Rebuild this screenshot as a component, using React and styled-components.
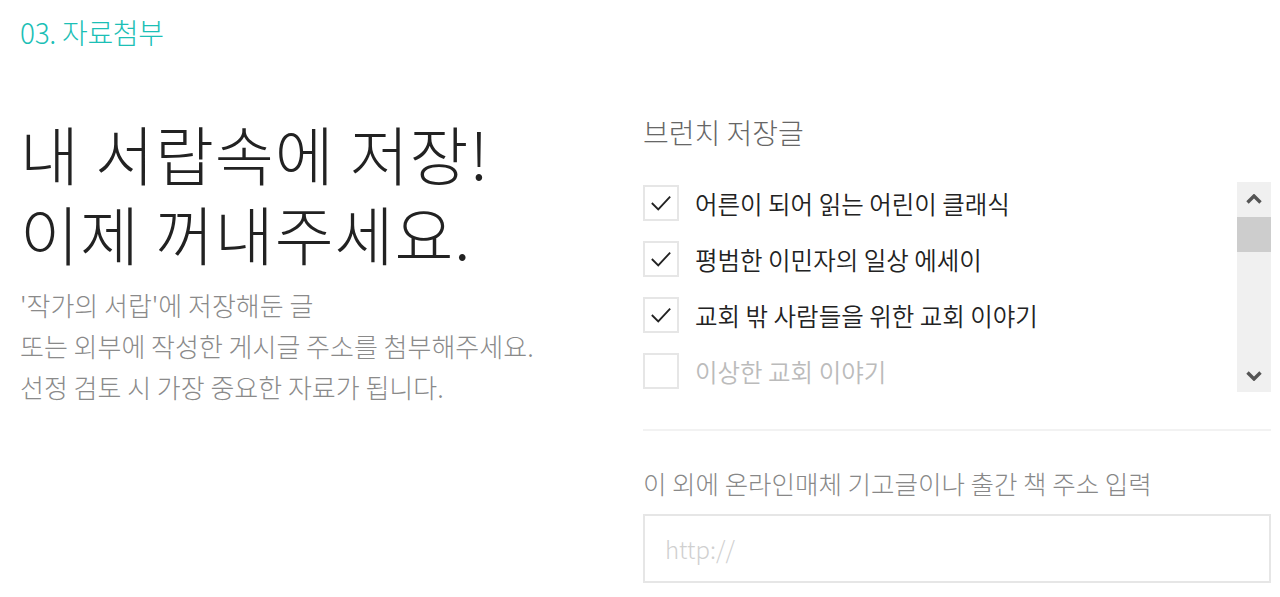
import React from 'react';
import styled, { createGlobalStyle } from 'styled-components';

const GlobalStyle = createGlobalStyle`
  html, body {
    margin: 0;
    padding: 0;
    background: #ffffff;
  }
  body {
    font-family: 'Noto Sans CJK KR', 'Noto Sans', sans-serif;
    color: #333333;
  }
`;

const Page = styled.div`
  padding: 10px 9px 0 20px;
  height: 597px;
  box-sizing: border-box;
  overflow: hidden;
`;

const StepTitle = styled.h3`
  margin: 0;
  font-size: 28px;
  font-weight: 300;
  color: #1cbfb6;
  line-height: 44px;
  letter-spacing: -0.3px;
`;

const Columns = styled.div`
  display: flex;
  margin-top: 58px;
`;

const Intro = styled.div`
  width: 623px;
  flex-shrink: 0;
`;

const Headline = styled.h2`
  margin: 0;
  font-size: 64px;
  font-weight: 300;
  line-height: 80px;
  letter-spacing: 1px;
  color: #222222;
`;

const Description = styled.p`
  margin: 12px 0 0;
  font-size: 26px;
  font-weight: 300;
  line-height: 41px;
  color: #8a8a8a;
`;

const Side = styled.div`
  flex: 1;
  display: flex;
  flex-direction: column;
`;

const SideLabel = styled.div`
  font-size: ${p => p.$size || 28}px;
  font-weight: 300;
  color: ${p => p.$color || '#666666'};
  line-height: 40px;
  margin-top: ${p => p.$top || 0}px;
`;

const ListBox = styled.div`
  display: flex;
  height: 210px;
  margin-top: 30px;
`;

const List = styled.ul`
  flex: 1;
  list-style: none;
  margin: 0;
  padding: 3px 0 0;
  display: flex;
  flex-direction: column;
  gap: 20px;
`;

const Item = styled.li`
  display: flex;
  align-items: center;
  gap: 16px;
  height: 36px;
  font-size: 24.5px;
  font-weight: 350;
  color: ${p => (p.$checked ? '#222222' : '#bbbbbb')};
`;

const Box = styled.span`
  width: 36px;
  height: 36px;
  box-sizing: border-box;
  border: 2px solid #e6e6e6;
  display: flex;
  align-items: center;
  justify-content: center;
  flex-shrink: 0;
  svg {
    width: 22px;
    height: 22px;
  }
`;

const Scrollbar = styled.div`
  width: 34px;
  background: #f0f0f0;
  display: flex;
  flex-direction: column;
  align-items: stretch;
`;

const ArrowButton = styled.div`
  height: 35px;
  display: flex;
  align-items: center;
  justify-content: center;
  flex-shrink: 0;
  svg {
    width: 16px;
    height: 12px;
  }
`;

const Thumb = styled.div`
  height: 35px;
  background: #cdcdcd;
`;

const Track = styled.div`
  flex: 1;
`;

const Divider = styled.hr`
  margin: 37px 0 0;
  border: none;
  border-top: 2px solid #f2f2f2;
`;

const UrlInput = styled.input`
  margin-top: 11px;
  height: 69px;
  box-sizing: border-box;
  border: 2px solid #e6e6e6;
  padding: 0 20px;
  font-family: 'Noto Sans CJK KR', 'Noto Sans', sans-serif;
  font-size: 24px;
  font-weight: 300;
  color: #333333;
  outline: none;
  &::placeholder {
    color: #d0d0d0;
  }
`;

const Check = () => (
  <svg viewBox="0 0 24 24" fill="none" stroke="#222" strokeWidth="2">
    <path d="M2 12l7 7L22 5" />
  </svg>
);

const Chevron = ({ down }) => (
  <svg viewBox="0 0 16 12" fill="none" stroke="#555" strokeWidth="3.4" strokeLinejoin="miter">
    <path d={down ? 'M1.5 3.5L8 10l6.5-6.5' : 'M1.5 8.5L8 2l6.5 6.5'} />
  </svg>
);

const posts = [
  { title: '어른이 되어 읽는 어린이 클래식', checked: true },
  { title: '평범한 이민자의 일상 에세이', checked: true },
  { title: '교회 밖 사람들을 위한 교회 이야기', checked: true },
  { title: '이상한 교회 이야기', checked: false },
];

export default function App() {
  return (
    <>
      <GlobalStyle />
      <Page>
        <StepTitle>03. 자료첨부</StepTitle>
        <Columns>
          <Intro>
            <Headline>
              내 서랍속에 저장!
              <br />
              이제 꺼내주세요.
            </Headline>
            <Description>
              '작가의 서랍'에 저장해둔 글
              <br />
              또는 외부에 작성한 게시글 주소를 첨부해주세요.
              <br />
              선정 검토 시 가장 중요한 자료가 됩니다.
            </Description>
          </Intro>
          <Side>
            <SideLabel>브런치 저장글</SideLabel>
            <ListBox>
              <List>
                {posts.map(post => (
                  <Item key={post.title} $checked={post.checked}>
                    <Box>{post.checked && <Check />}</Box>
                    {post.title}
                  </Item>
                ))}
              </List>
              <Scrollbar>
                <ArrowButton><Chevron /></ArrowButton>
                <Thumb />
                <Track />
                <ArrowButton><Chevron down /></ArrowButton>
              </Scrollbar>
            </ListBox>
            <Divider />
            <SideLabel $top={32} $size={25.5} $color="#888888">
              이 외에 온라인매체 기고글이나 출간 책 주소 입력
            </SideLabel>
            <UrlInput placeholder="http://" />
          </Side>
        </Columns>
      </Page>
    </>
  );
}
